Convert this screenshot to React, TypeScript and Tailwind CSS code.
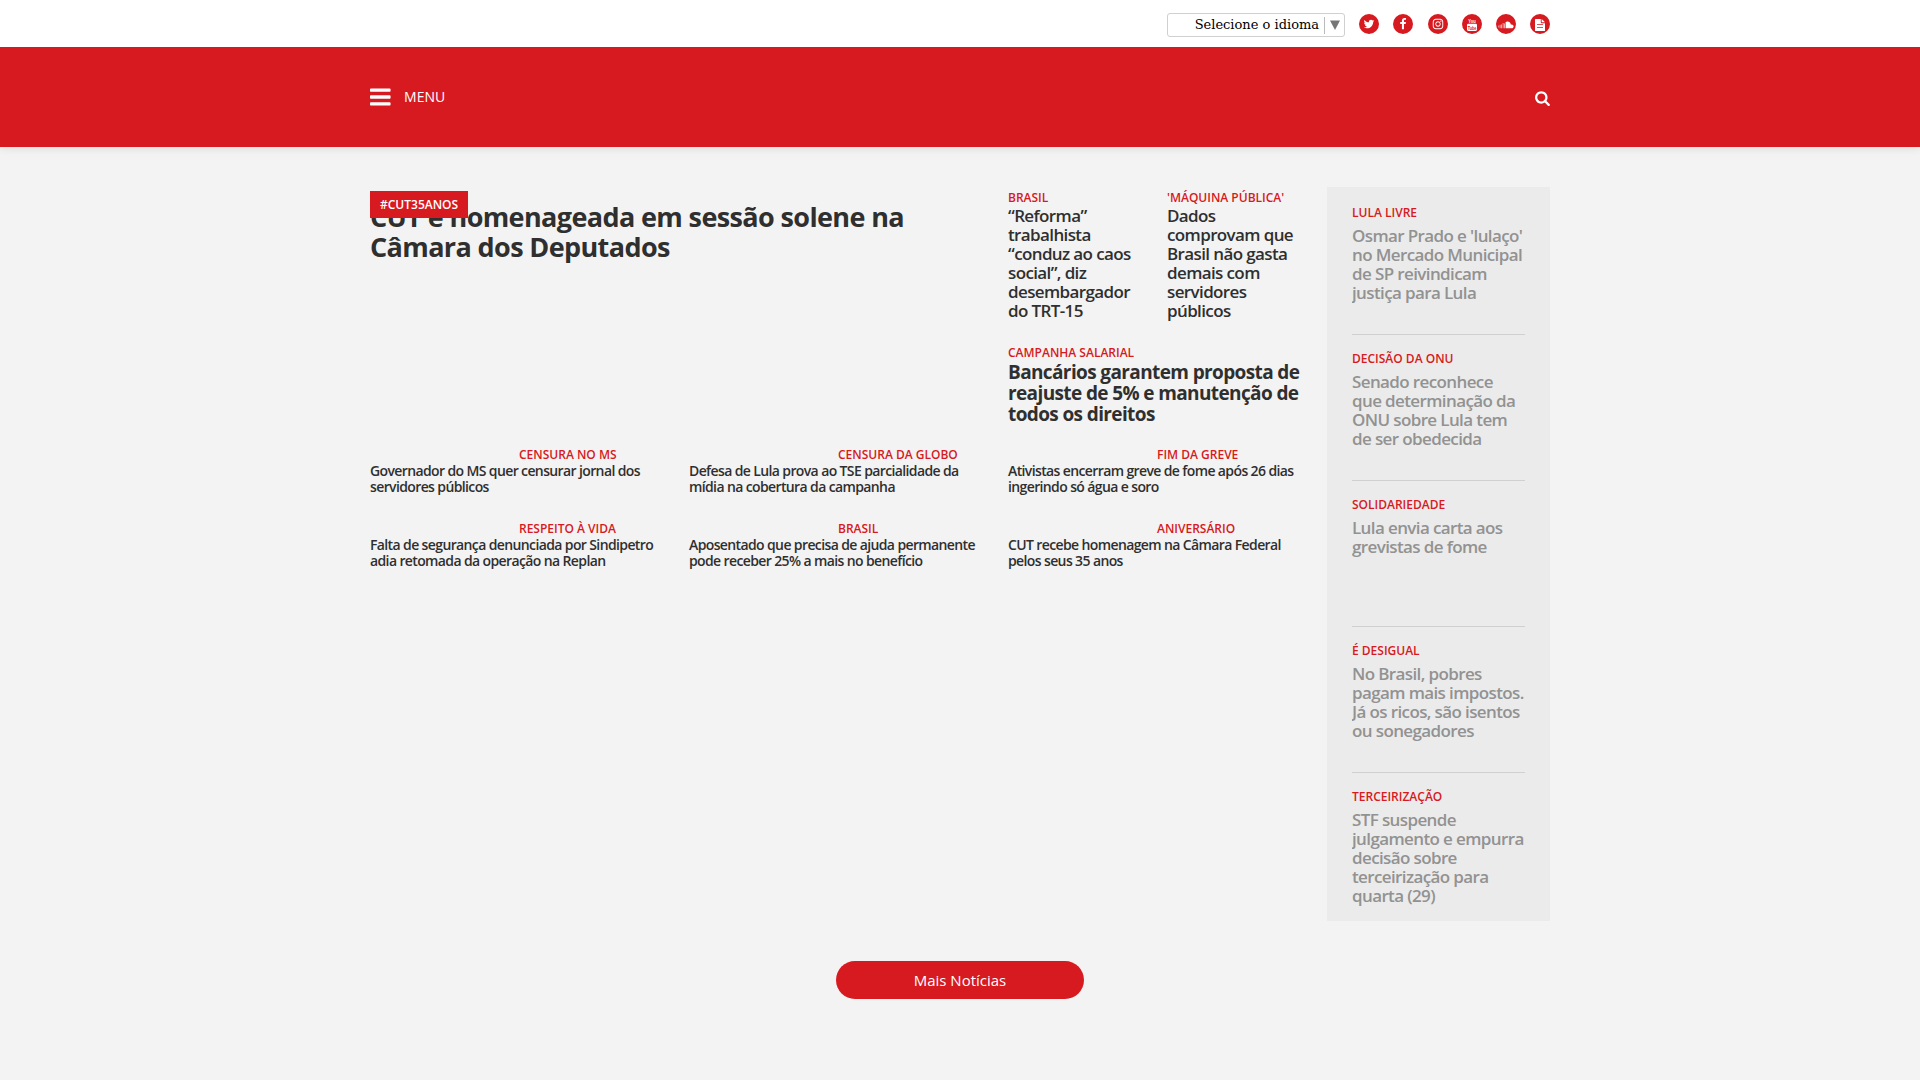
import type { ReactNode } from 'react';
import { FaInstagram } from 'react-icons/fa';

type Story = { tag: string; title: string };

const SMALL: Story[] = [
  { tag: 'CENSURA NO MS', title: 'Governador do MS quer censurar jornal dos servidores públicos' },
  { tag: 'CENSURA DA GLOBO', title: 'Defesa de Lula prova ao TSE parcialidade da mídia na cobertura da campanha' },
  { tag: 'FIM DA GREVE', title: 'Ativistas encerram greve de fome após 26 dias ingerindo só água e soro' },
  { tag: 'RESPEITO À VIDA', title: 'Falta de segurança denunciada por Sindipetro adia retomada da operação na Replan' },
  { tag: 'BRASIL', title: 'Aposentado que precisa de ajuda permanente pode receber 25% a mais no benefício' },
  { tag: 'ANIVERSÁRIO', title: 'CUT recebe homenagem na Câmara Federal pelos seus 35 anos' },
];

const SIDE: Story[] = [
  { tag: 'LULA LIVRE', title: "Osmar Prado e 'lulaço' no Mercado Municipal de SP reivindicam justiça para Lula" },
  { tag: 'DECISÃO DA ONU', title: 'Senado reconhece que determinação da ONU sobre Lula tem de ser obedecida' },
  { tag: 'SOLIDARIEDADE', title: 'Lula envia carta aos grevistas de fome' },
  { tag: 'É DESIGUAL', title: 'No Brasil, pobres pagam mais impostos. Já os ricos, são isentos ou sonegadores' },
  { tag: 'TERCEIRIZAÇÃO', title: 'STF suspende julgamento e empurra decisão sobre terceirização para quarta (29)' },
];

function Kicker({ children, className = '' }: { children: ReactNode; className?: string }) {
  return <p className={`h-[17px] whitespace-nowrap text-[12px] leading-[17px] font-semibold text-[#d71920] ${className}`}>{children}</p>;
}

function Glyph({ d }: { d: string }) {
  return (
    <svg viewBox="0 0 1792 1792" className="size-3" fill="currentColor">
      <path d={d} />
    </svg>
  );
}

function YouTubeGlyph() {
  return (
    <svg viewBox="0 0 12 14" className="h-[14px] w-3 overflow-visible" fill="currentColor">
      <text x="6" y="5.9" textAnchor="middle" fontFamily="Liberation Sans" fontWeight="700" fontSize="5.8" textLength="7.4" lengthAdjust="spacingAndGlyphs">You</text>
      <rect x="1" y="6.7" width="10" height="7.2" rx="1.3" />
      <text x="6" y="12.6" textAnchor="middle" fontFamily="Liberation Sans" fontWeight="700" fontSize="5.8" fill="#d71920" textLength="8.6" lengthAdjust="spacingAndGlyphs">Tube</text>
    </svg>
  );
}

function SoundcloudGlyph() {
  return (
    <svg viewBox="0 0 16 8" className="mt-px h-2 w-4" fill="currentColor">
      <path d="M.4 4.6h.7v2H.4zM1.7 3.8h.8v3.4h-.8zM3.2 3.4h.8v3.9h-.8zM4.7 2h.8v5.3h-.8zM6.1 2.4h.8v4.9h-.8z" opacity=".75" />
      <path d="M7.6 1.1C8.2.8 8.8.6 9.4.6c1.8 0 3.2 1.3 3.4 3 .3-.1.5-.2.8-.2 1.1 0 2 .9 2 2s-.9 1.9-2 1.9h-6z" />
    </svg>
  );
}

function DocumentGlyph() {
  return (
    <svg viewBox="0 0 10 12" className="mt-[2px] h-3 w-[10px]" fill="currentColor">
      <path fillRule="evenodd" d="M.6 0H5.8v3.6c0 .4.3.6.6.6H10v7.2c0 .4-.3.6-.6.6H.6c-.3 0-.6-.2-.6-.6V.6C0 .2.3 0 .6 0zM2 5.2v.8h6v-.8zM2 8v.8h6V8z" />
      <path d="M6.7 0L10 3.3H6.7z" />
    </svg>
  );
}

const SOCIAL: ReactNode[] = [
  <Glyph d="M1684 408q-67 98-162 167 1 14 1 42 0 130-38 259.5t-115.5 248.5-184.5 210.5-258 146-323 54.5q-271 0-496-145 35 4 78 4 225 0 401-138-105-2-188-64.5t-114-159.5q33 5 61 5 43 0 85-11-112-23-185.5-111.5t-73.5-205.5v-4q68 38 146 41-66-44-105-115t-39-154q0-88 44-163 121 149 294.5 238.5t371.5 99.5q-8-38-8-74 0-134 94.5-228.5t228.5-94.5q140 0 236 102 109-21 205-78-37 115-142 178 93-10 186-50z" />,
  <Glyph d="M1343 12v264h-157q-86 0-116 36t-30 108v189h293l-39 296h-254v759h-306v-759h-255v-296h255v-218q0-186 104-288.5t277-102.5q147 0 228 12z" />,
  <FaInstagram size={12} />,
  <YouTubeGlyph />,
  <SoundcloudGlyph />,
  <DocumentGlyph />,
];

export default function App() {
  return (
    <div className="min-h-[1080px] bg-[#f3f3f3] font-['Open_Sans',sans-serif] text-[#2f2f2f]">
      <div className="h-[47px] bg-white">
        <div className="mx-auto flex w-[1180px] items-start justify-end">
          <div className="mt-[13px] mr-[14.25px] flex h-6 w-[178px] items-center justify-end rounded-[3px] border border-[#d0d0d0] pr-1 font-['DejaVu_Serif',serif] text-[13px] text-black">
            <span className="leading-4">Selecione o idioma</span>
            <span className="ml-[5px] h-[17px] w-px bg-[#bbb]" />
            <svg viewBox="0 0 10 10" className="ml-[5px] size-[10px]">
              <path d="M0 .5h10L5 10z" fill="#767676" />
            </svg>
          </div>
          <div className="mt-[14px] flex gap-[14.15px]">
            {SOCIAL.map((icon, i) => (
              <a key={i} className="flex size-5 items-center justify-center rounded-full bg-[#d71920] text-white">{icon}</a>
            ))}
          </div>
        </div>
      </div>

      <header className="h-[100px] bg-[#d71920] text-white shadow-[0_0_10px_rgba(0,0,0,0.12)] [clip-path:inset(0_0_-20px_0)]">
        <div className="mx-auto flex h-full w-[1180px] justify-between">
          <div className="flex">
            <svg viewBox="128 0 1536 1792" className="mt-[37.5px] h-6 w-[20.57px]" fill="currentColor">
              <path d="M1664 1344v128q0 26-19 45t-45 19h-1408q-26 0-45-19t-19-45v-128q0-26 19-45t45-19h1408q26 0 45 19t19 45zm0-512v128q0 26-19 45t-45 19h-1408q-26 0-45-19t-19-45v-128q0-26 19-45t45-19h1408q26 0 45 19t19 45zm0-512v128q0 26-19 45t-45 19h-1408q-26 0-45-19t-19-45v-128q0-26 19-45t45-19h1408q26 0 45 19t19 45z" />
            </svg>
            <span className="mt-10 ml-[13.5px] text-[14px] leading-[19px]">MENU</span>
          </div>
          <svg viewBox="64 0 1664 1792" className="mt-[43px] h-4 w-[14.86px]" fill="currentColor">
            <path d="M1216 832q0-185-131.5-316.5t-316.5-131.5-316.5 131.5-131.5 316.5 131.5 316.5 316.5 131.5 316.5-131.5 131.5-316.5zm512 832q0 52-38 90t-90 38q-54 0-90-38l-343-342q-179 124-399 124-143 0-273.5-55.5t-225-150-150-225-55.5-273.5 55.5-273.5 150-225 225-150 273.5-55.5 273.5 55.5 225 150 150 225 55.5 273.5q0 220-124 399l343 343q37 37 37 90z" />
          </svg>
        </div>
      </header>

      <main className="mx-auto w-[1180px] pt-10">
        <div className="flex justify-between">
          <div className="w-[936px] pt-[2px]">
            <div className="flex h-[257px] justify-between">
              <article className="relative w-[608px] pt-[13px]">
                <span className="absolute top-[2px] left-0 h-[27px] w-[98px] bg-[#d71920] pl-[10px] text-[12px] leading-[27px] font-semibold text-white">#CUT35ANOS</span>
                <h1 className="w-[560px] text-[27px] leading-[30px] font-bold tracking-[-0.62px]">CUT é homenageada em sessão solene na Câmara dos Deputados</h1>
              </article>
              <div className="w-[298px]">
                <div className="flex gap-[30px]">
                  <article className="w-[129px] shrink-0">
                    <Kicker>BRASIL</Kicker>
                    <h2 className="text-[17px] leading-[19px] font-semibold tracking-[-0.62px]">“Reforma” trabalhista “conduz ao caos social”, diz desembargador do TRT-15</h2>
                  </article>
                  <article className="w-[129px] shrink-0">
                    <Kicker>'MÁQUINA PÚBLICA'</Kicker>
                    <h2 className="text-[17px] leading-[19px] font-semibold tracking-[-0.62px]">Dados comprovam que Brasil não gasta demais com servidores públicos</h2>
                  </article>
                </div>
                <article className="mt-6">
                  <Kicker>CAMPANHA SALARIAL</Kicker>
                  <h2 className="mt-px text-[19px] leading-[21px] font-bold tracking-[-0.62px]">Bancários garantem proposta de reajuste de 5% e manutenção de todos os direitos</h2>
                </article>
              </div>
            </div>
            <div className="grid grid-cols-[289px_289px_289px] gap-x-[30px]">
              {SMALL.map((s) => (
                <article key={s.tag} className="h-[74px]">
                  <Kicker className="pl-[149px]">{s.tag}</Kicker>
                  <h3 className="text-[14px] leading-4 font-semibold tracking-[-0.62px]">{s.title}</h3>
                </article>
              ))}
            </div>
          </div>

          <aside className="h-[734px] w-[223px] bg-[#ebebeb] px-[25px] pt-[1px]">
            {SIDE.map((s, i) => (
              <article key={s.tag} className={`h-[146px] border-t pt-[15px] ${i ? 'border-[#d0d0d0]' : 'border-transparent'}`}>
                <Kicker>{s.tag}</Kicker>
                <h3 className="mt-[5px] overflow-hidden pb-[5px] text-[17px] leading-[19px] font-semibold tracking-[-0.62px] text-[#929292]">{s.title}</h3>
              </article>
            ))}
          </aside>
        </div>
        <button className="mx-auto mt-10 block h-[38px] w-[248px] rounded-[20px] bg-[#d71920] text-[15px] leading-[38px] text-white">Mais Notícias</button>
      </main>
    </div>
  );
}
